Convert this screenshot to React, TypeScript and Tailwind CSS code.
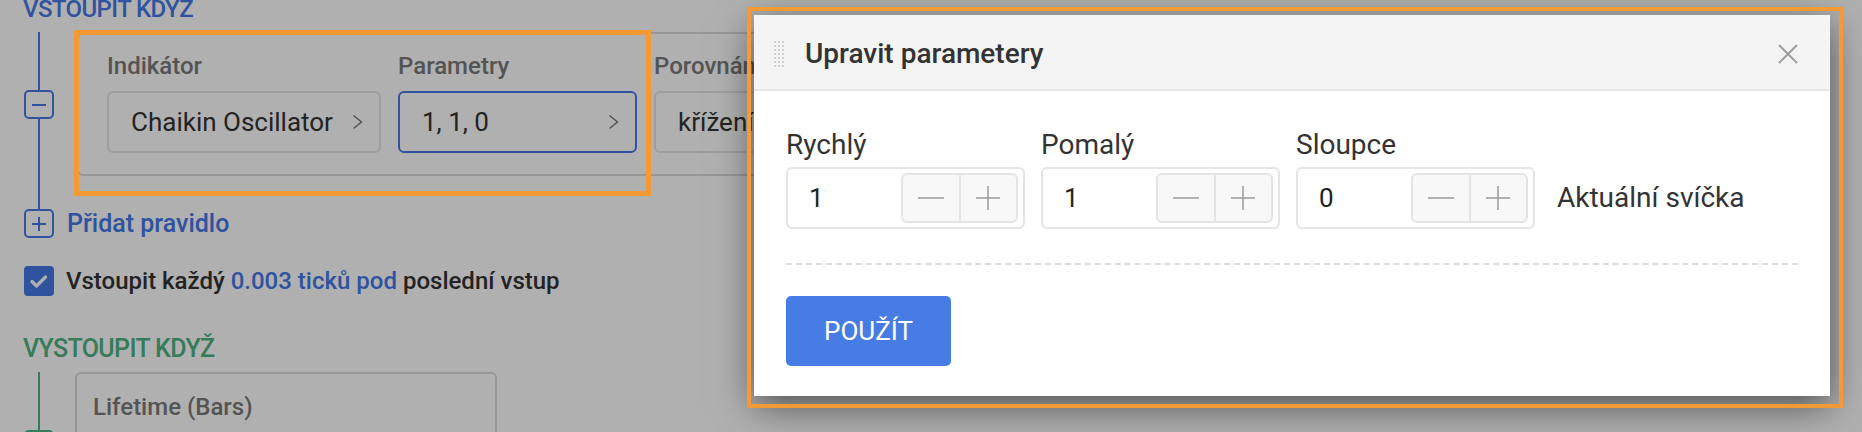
import React from 'react';

const BLUE = 'text-[#4679e6]';

function TreeBox({ sign, green }: { sign: 'minus' | 'plus'; green?: boolean }) {
  const c = green ? '#52b283' : '#4679e6';
  return (
    <div
      className={`flex h-[29px] w-[30px] items-center justify-center rounded-[5px] border-2 bg-white ${green ? 'border-[#52b283]' : 'border-[#4679e6]'}`}
    >
      <svg width="16" height="16" viewBox="0 0 16 16">
        <line x1="1" y1="8" x2="15" y2="8" stroke={c} strokeWidth="2" />
        {sign === 'plus' && <line x1="8" y1="1" x2="8" y2="15" stroke={c} strokeWidth="2" />}
      </svg>
    </div>
  );
}

function SelectButton({ value, width, active }: { value: string; width: string; active?: boolean }) {
  return (
    <div
      className={`flex h-[62px] items-center justify-between rounded-[6px] border-2 pl-[22px] pr-[16px] ${width} ${active ? 'border-[#4679e6]' : 'border-[#e5e5e5]'}`}
    >
      <span className="text-[26px] text-[#333]">{value}</span>
      <svg width="11" height="16" viewBox="0 0 11 16">
        <path d="M1.5 1.5 L9.5 8 L1.5 14.5" fill="none" stroke="#7a7a7a" strokeWidth="1.5" />
      </svg>
    </div>
  );
}

function Stepper({ label, value }: { label: string; value: string }) {
  return (
    <div className="flex flex-col">
      <span className="text-[28px] leading-[32px] text-[#333]">{label}</span>
      <div className="mt-[6px] flex h-[62px] w-[239px] items-center justify-between rounded-[6px] border-2 border-[#e4e4e4] pl-[21px] pr-[5px]">
        <span className="text-[26px] text-[#222]">{value}</span>
        <div className="flex h-[50px] w-[117px] rounded-[6px] border-2 border-[#e4e4e4] bg-[#f8f8f8]">
          <div className="flex flex-1 items-center justify-center">
            <svg width="26" height="4" viewBox="0 0 26 4">
              <line x1="0" y1="2" x2="26" y2="2" stroke="#9a9a9a" strokeWidth="1.5" />
            </svg>
          </div>
          <div className="flex flex-1 items-center justify-center border-l-2 border-[#e4e4e4]">
            <svg width="26" height="26" viewBox="0 0 26 26">
              <line x1="1" y1="13" x2="25" y2="13" stroke="#9a9a9a" strokeWidth="1.5" />
              <line x1="13" y1="1" x2="13" y2="25" stroke="#9a9a9a" strokeWidth="1.5" />
            </svg>
          </div>
        </div>
      </div>
    </div>
  );
}

function DragDots() {
  const dots = [];
  for (let r = 0; r < 7; r++) {
    for (let c = 0; c < 3; c++) {
      dots.push(<circle key={`${r}-${c}`} cx={1 + c * 4} cy={1 + r * 4} r="1" fill="#c6c6c6" />);
    }
  }
  return (
    <svg width="10" height="26" viewBox="0 0 10 26">
      {dots}
    </svg>
  );
}

export default function App() {
  return (
    <div className="relative h-[432px] w-full overflow-hidden bg-white font-['Roboto','Liberation_Sans',sans-serif]">
      {/* page behind the dialog */}
      <div className="pl-[24px]">
        <div className={`-ml-px mt-[-3px] text-[24px] font-medium leading-[24px] tracking-tight ${BLUE}`}>VSTOUPIT KDYZ</div>

        <div className="mt-[11px] flex">
          <div className="flex w-[30px] flex-col items-center">
            <div className="h-[58px] w-[2px] bg-[#4679e6]" />
            <TreeBox sign="minus" />
            <div className="w-[2px] flex-1 bg-[#4679e6]" />
          </div>
          <div className="ml-[23px] pb-[33px]">
            <div className="flex h-[144px] w-[900px] gap-[17px] rounded-[6px] border-2 border-[#dbdbdb] pl-[28px] pt-[18px]">
              <div className="flex flex-col">
                <span className="text-[24px] font-medium leading-[28px] text-[#7a7a7a]">Indikátor</span>
                <div className="mt-[11px]">
                  <SelectButton value="Chaikin Oscillator" width="w-[274px]" />
                </div>
              </div>
              <div className="flex flex-col">
                <span className="text-[24px] font-medium leading-[28px] text-[#7a7a7a]">Parametry</span>
                <div className="mt-[11px]">
                  <SelectButton value="1, 1, 0" width="w-[239px]" active />
                </div>
              </div>
              <div className="flex flex-col">
                <span className="text-[24px] font-medium leading-[28px] text-[#7a7a7a]">Porovnání</span>
                <div className="mt-[11px]">
                  <SelectButton value="křížení" width="w-[260px]" />
                </div>
              </div>
            </div>
          </div>
        </div>

        <div className="flex h-[29px] items-center">
          <TreeBox sign="plus" />
          <span className={`ml-[13px] text-[25px] font-medium ${BLUE}`}>Přidat pravidlo</span>
        </div>

        <div className="mt-[28px] flex h-[30px] items-center">
          <div className="flex h-[30px] w-[30px] items-center justify-center rounded-[4px] bg-[#4679e6]">
            <svg width="30" height="30" viewBox="0 0 30 30">
              <path d="M8 15.5 L12.5 20 L21.5 11" fill="none" stroke="white" strokeWidth="3.2" strokeLinecap="round" strokeLinejoin="round" />
            </svg>
          </div>
          <span className="ml-[12px] text-[24px] font-medium leading-[30px] text-[#333]">
            Vstoupit každý <span className={BLUE}>0.003 ticků pod</span> poslední vstup
          </span>
        </div>

        <div className="-ml-px mt-[40px] text-[25px] font-medium leading-[26px] tracking-tight text-[#52b283]">VYSTOUPIT KDYŽ</div>

        <div className="mt-[10px] flex">
          <div className="flex w-[30px] flex-col items-center">
            <div className="h-[58px] w-[2px] bg-[#52b283]" />
            <TreeBox sign="minus" green />
          </div>
          <div className="ml-[21px] h-[120px] w-[422px] rounded-[6px] border-2 border-[#dbdbdb] pl-[16px] pt-[19px]">
            <span className="text-[24px] font-medium leading-[28px] text-[#7a7a7a]">Lifetime (Bars)</span>
          </div>
        </div>
      </div>

      {/* dim overlay */}
      <div className="absolute inset-0 bg-black/[0.31]" />

      {/* dialog */}
      <div className="absolute left-[754px] top-[15px] w-[1076px] bg-white shadow-[0_10px_36px_rgba(0,0,0,0.55)]">
        <div className="flex h-[76px] items-center border-b-2 border-[#e6e6e6] bg-[#f4f4f4] pl-[20px] pr-[32px] pt-[3px]">
          <DragDots />
          <span className="ml-[21px] text-[28px] font-medium text-[#333]">Upravit parametery</span>
          <svg className="ml-auto" width="20" height="20" viewBox="0 0 20 20">
            <path d="M1 1 L19 19 M19 1 L1 19" stroke="#9e9e9e" strokeWidth="2" />
          </svg>
        </div>
        <div className="px-[32px] pb-[30px] pt-[38px]">
          <div className="flex gap-4">
            <Stepper label="Rychlý" value="1" />
            <Stepper label="Pomalý" value="1" />
            <Stepper label="Sloupce" value="0" />
            <div className="ml-[6px] flex h-[62px] items-center self-end text-[28px] text-[#333]">Aktuální svíčka</div>
          </div>
          <div className="mt-[34px] border-t-2 border-dashed border-[#dcdcdc]" />
          <button className="mt-[31px] flex h-[70px] w-[165px] items-center justify-center rounded-[5px] bg-[#477ce4] text-[26px] text-white">
            POUŽÍT
          </button>
        </div>
      </div>

      {/* annotation frames */}
      <div className="absolute left-[74px] top-[30px] h-[166px] w-[577px] border-[5px] border-[#f39a35]" />
      <div className="absolute left-[747px] top-[7px] h-[401px] w-[1096px] border-4 border-[#f39a35]" />
    </div>
  );
}
